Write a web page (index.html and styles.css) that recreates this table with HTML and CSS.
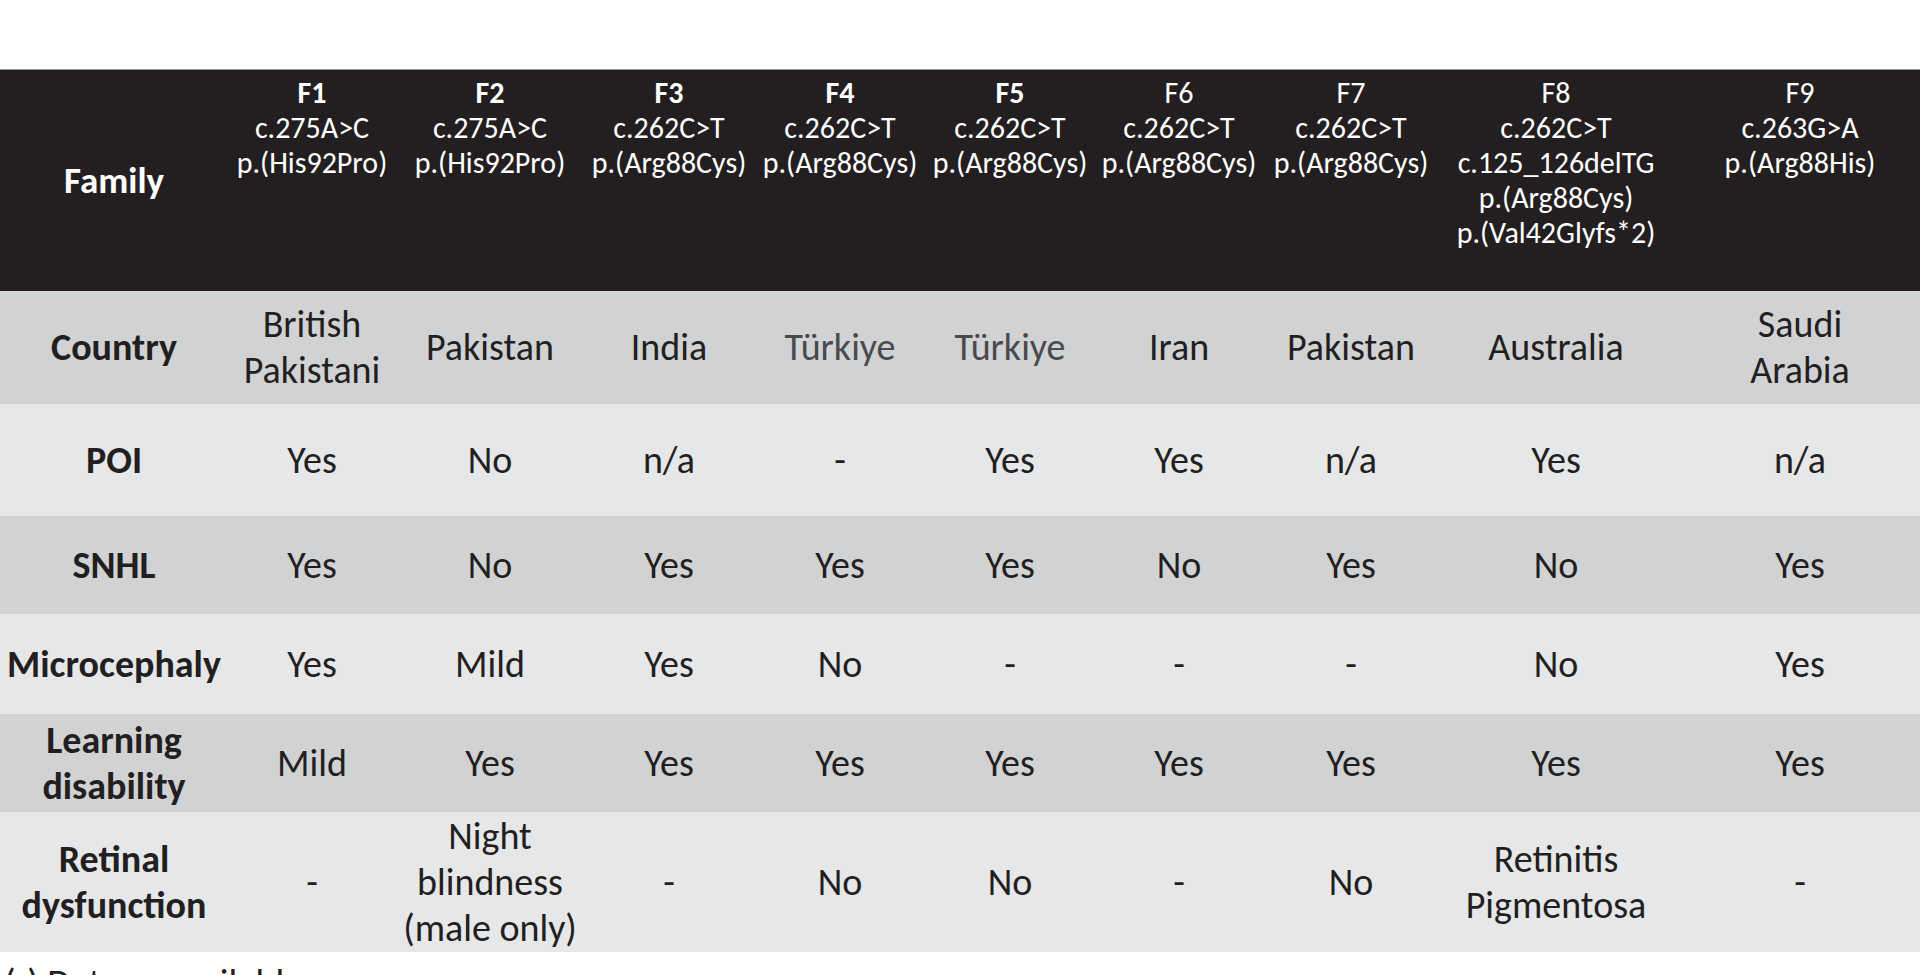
FILE: index.html
```html
<!DOCTYPE html>
<html lang="en">
<head>
<meta charset="utf-8">
<title>Family table</title>
<link rel="stylesheet" href="styles.css">
</head>
<body>
<main class="page">
  <table class="grid">
    <colgroup>
      <col class="c0"><col class="c1"><col class="c2"><col class="c3"><col class="c4"><col class="c5"><col class="c6"><col class="c7"><col class="c8"><col class="c9">
    </colgroup>
    <thead>
      <tr class="head">
        <th class="label family">Family</th>
        <th><b>F1</b><br>c.275A&gt;C<br>p.(His92Pro)</th>
        <th><b>F2</b><br>c.275A&gt;C<br>p.(His92Pro)</th>
        <th><b>F3</b><br>c.262C&gt;T<br>p.(Arg88Cys)</th>
        <th><b>F4</b><br>c.262C&gt;T<br>p.(Arg88Cys)</th>
        <th><b>F5</b><br>c.262C&gt;T<br>p.(Arg88Cys)</th>
        <th>F6<br>c.262C&gt;T<br>p.(Arg88Cys)</th>
        <th>F7<br>c.262C&gt;T<br>p.(Arg88Cys)</th>
        <th>F8<br>c.262C&gt;T<br>c.125_126delTG<br>p.(Arg88Cys)<br>p.(Val42Glyfs*2)</th>
        <th>F9<br>c.263G&gt;A<br>p.(Arg88His)</th>
      </tr>
    </thead>
    <tbody>
      <tr class="dark r-country">
        <th class="label">Country</th>
        <td>British<br>Pakistani</td>
        <td>Pakistan</td>
        <td>India</td>
        <td class="soft">Türkiye</td>
        <td class="soft">Türkiye</td>
        <td>Iran</td>
        <td>Pakistan</td>
        <td>Australia</td>
        <td>Saudi<br>Arabia</td>
      </tr>
      <tr class="light r-poi">
        <th class="label">POI</th>
        <td>Yes</td><td>No</td><td>n/a</td><td>-</td><td>Yes</td><td>Yes</td><td>n/a</td><td>Yes</td><td>n/a</td>
      </tr>
      <tr class="dark r-snhl">
        <th class="label">SNHL</th>
        <td>Yes</td><td>No</td><td>Yes</td><td>Yes</td><td>Yes</td><td>No</td><td>Yes</td><td>No</td><td>Yes</td>
      </tr>
      <tr class="light r-micro">
        <th class="label">Microcephaly</th>
        <td>Yes</td><td>Mild</td><td>Yes</td><td>No</td><td>-</td><td>-</td><td>-</td><td>No</td><td>Yes</td>
      </tr>
      <tr class="dark r-learn">
        <th class="label">Learning<br>disability</th>
        <td>Mild</td><td>Yes</td><td>Yes</td><td>Yes</td><td>Yes</td><td>Yes</td><td>Yes</td><td>Yes</td><td>Yes</td>
      </tr>
      <tr class="light r-retinal">
        <th class="label">Retinal<br>dysfunction</th>
        <td>-</td>
        <td>Night<br>blindness<br>(male only)</td>
        <td>-</td>
        <td>No</td>
        <td>No</td>
        <td>-</td>
        <td>No</td>
        <td>Retinitis<br>Pigmentosa</td>
        <td>-</td>
      </tr>
    </tbody>
  </table>
  <p class="note">(-) Data unavailable</p>
</main>
</body>
</html>
```
FILE: styles.css
```css
html, body {
  margin: 0;
  padding: 0;
  background: #ffffff;
  overflow: hidden;
}

.page {
  padding-top: 69px;
  font-family: "Carlito", "Lato", "Liberation Sans", sans-serif;
  color: #231f20;
}

.grid {
  table-layout: fixed;
  width: 1926px;
  border-collapse: collapse;
  border-spacing: 0;
}

.c0 { width: 228px; }
.c1 { width: 168px; }
.c2 { width: 188px; }
.c3 { width: 170px; }
.c4 { width: 172px; }
.c5 { width: 168px; }
.c6 { width: 170px; }
.c7 { width: 174px; }
.c8 { width: 236px; }
.c9 { width: 252px; }

.grid th,
.grid td {
  padding: 0;
  text-align: center;
  vertical-align: middle;
}

.head {
  height: 221px;
  background: #231f20;
  color: #ffffff;
  border-top: 1px solid #9a9a9a;
}

.head th {
  vertical-align: top;
  font-weight: normal;
  font-size: 30px;
  line-height: 35px;
  padding-top: 5px;
}

.head th b {
  font-weight: bold;
}

.head th.family {
  vertical-align: middle;
  padding-top: 0;
  font-weight: bold;
  font-size: 37px;
}

.grid tbody td,
.grid tbody th {
  font-size: 38px;
  line-height: 46px;
}

.grid tbody th.label {
  font-weight: bold;
}

.dark { background: #d1d2d4; }
.light { background: #e6e7e8; }

.r-country { height: 113px; }
.r-poi { height: 112px; }
.r-snhl { height: 98px; }
.r-micro { height: 100px; }
.r-learn { height: 98px; }
.r-retinal { height: 140px; }

.soft { color: #4a4a4c; }

.note {
  margin: 8px 0 0 4px;
  font-size: 38px;
  line-height: 46px;
  color: #231f20;
}
```
